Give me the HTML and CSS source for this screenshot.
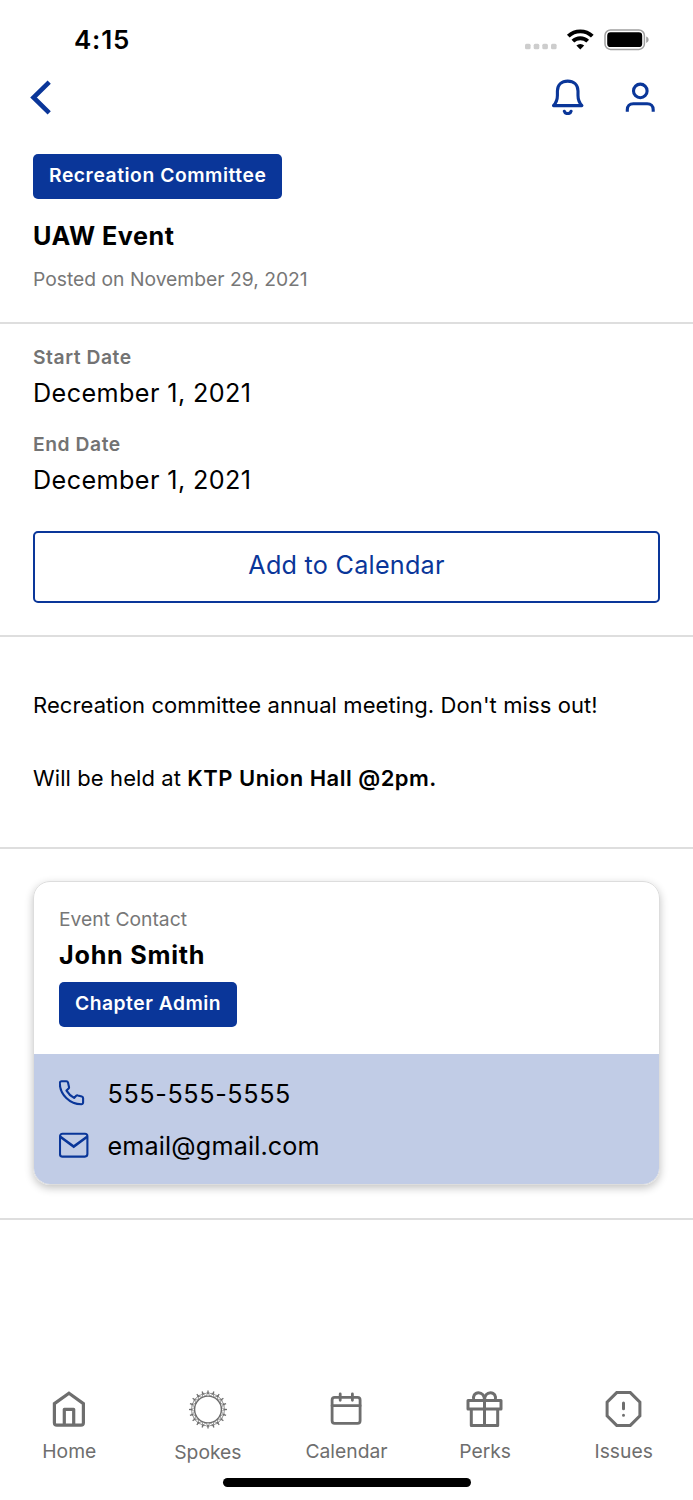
FILE: index.html
```html
<!DOCTYPE html>
<html lang="en">
<head>
<meta charset="utf-8">
<meta name="viewport" content="width=device-width, initial-scale=1">
<title>UAW Event</title>
<link rel="stylesheet" href="styles.css">
</head>
<body>
<div class="statusbar">
  <span class="time">4:15</span>
  <svg class="status-icons" width="126" height="24" viewBox="0 0 126 24">
    <g fill="#cdcdcd">
      <rect x="2" y="15.8" width="5.6" height="5.4" rx="1.5"/>
      <rect x="10.7" y="15.8" width="5.6" height="5.4" rx="1.5"/>
      <rect x="19.3" y="15.8" width="5.6" height="5.4" rx="1.5"/>
      <rect x="28" y="15.8" width="5.6" height="5.4" rx="1.5"/>
    </g>
    <g fill="none" stroke="#000" stroke-width="3.9">
      <path d="M45.3 8.2a17.3 17.3 0 0 1 24 0"/>
      <path d="M49.9 13.2a10.6 10.6 0 0 1 14.8 0"/>
    </g>
    <path d="M57.3 21.6l-3.9-4a5.6 5.6 0 0 1 7.8 0z"/>
    <rect x="82" y="2" width="39.4" height="19.4" rx="5.5" fill="none" stroke="#a0a0a0" stroke-width="1.5"/>
    <rect x="84.2" y="4.3" width="35" height="14.8" rx="3.4"/>
    <path d="M123.2 8.5v6.4c3.2-1.3 3.2-5.1 0-6.4z" fill="#a0a0a0"/>
  </svg>
</div>

<div class="header">
  <svg class="icon back" width="36" height="36" viewBox="0 0 36 36" stroke-width="4.6">
    <path d="M21.2 3.2L5.500 18.500l15.700 15.300"/>
  </svg>
  <svg class="icon" width="36" height="36" viewBox="0 0 36 36" stroke-width="3.1">
    <path d="M3.500 26.600C6.500 23.400 7.400 21 7.400 16.500V12C7.400 5.600 11.900 2.100 17.700 2.100S28 5.600 28 12v4.500c0 4.500.9 6.900 3.900 10.100z" stroke-linejoin="round"/>
    <path d="M14.300 32.200c.7 3.200 6.100 3.200 6.800 0" stroke-linecap="round"/>
  </svg>
  <svg class="icon" width="36" height="36" viewBox="0 0 36 36" stroke-width="3.1">
    <circle cx="18.300" cy="11.900" r="6.800"/>
    <path d="M5.300 32.800v-2.100c0-3.600 2.300-6 6-6h13.900c3.700 0 6 2.400 6 6v2.100"/>
  </svg>
</div>

<div class="section intro">
  <span class="tag">Recreation Committee</span>
  <h1>UAW Event</h1>
  <p class="muted posted">Posted on November 29, 2021</p>
</div>

<div class="section dates">
  <p class="label">Start Date</p>
  <p class="value">December 1, 2021</p>
  <p class="label">End Date</p>
  <p class="value">December 1, 2021</p>
  <button class="btn">Add to Calendar</button>
</div>

<div class="section description">
  <p>Recreation committee annual meeting. Don't miss out!</p>
  <p>Will be held at <b>KTP Union Hall @2pm.</b></p>
</div>

<div class="section contact">
  <div class="card">
    <div class="card-top">
      <p class="muted">Event Contact</p>
      <h2>John Smith</h2>
      <span class="tag admin">Chapter Admin</span>
    </div>
    <div class="card-bottom">
      <div class="row">
        <svg class="icon" width="32" height="32" viewBox="0 0 32 32" stroke-width="2.1">
          <path d="M2.600 3.300h4.800c.8 0 1.400.5 1.600 1.300l1 4.400c.1.600 0 1.100-.4 1.500l-2.100 2.100c2 3.300 4.300 5.500 7.600 7.300l2.100-2.100c.4-.4 1-.6 1.600-.4l4 1c.8.2 1.300.9 1.300 1.700v4.500c0 1-.8 1.800-1.800 1.700C10.900 26.300.8 16.700.8 5.100c0-1 .8-1.800 1.800-1.800z" stroke-linejoin="round"/>
        </svg>
        <span class="phone">555-555-5555</span>
      </div>
      <div class="row">
        <svg class="icon" width="32" height="32" viewBox="0 0 32 32" stroke-width="2.100">
          <rect x="1" y="3.800" width="27.400" height="22.800" rx="2.500"/>
          <path d="M1.300 6.800l13.400 9.800L28.100 6.800" stroke-width="2.600"/>
        </svg>
        <span class="email">email@gmail.com</span>
      </div>
    </div>
  </div>
</div>

<div class="tabbar">
  <div class="tab">
    <svg width="40" height="40" viewBox="0 0 40 40" stroke-width="3.200">
      <path d="M20 4.200L34.400 14.600v19.100a2.500 2.500 0 0 1-2.500 2.500H7.900a2.500 2.500 0 0 1-2.500-2.500V14.600z"/>
      <path d="M15.300 36V20.300h9.400V36" stroke-linejoin="round"/>
    </svg>
    <span>Home</span>
  </div>
  <div class="tab">
    <svg width="40" height="40" viewBox="0 0 40 40">
      <circle cx="20" cy="20.500" r="13.400" stroke-width="1.400"/>
      <g id="spokes"></g>
    </svg>
    <span class="low">Spokes</span>
  </div>
  <div class="tab">
    <svg width="40" height="40" viewBox="0 0 40 40" stroke-width="2.800">
      <rect x="6.100" y="8.400" width="28" height="26" rx="2.600"/>
      <path d="M6.100 16.700h28M14.200 5v6.300M26.400 5v6.300" stroke-linecap="round"/>
    </svg>
    <span>Calendar</span>
  </div>
  <div class="tab">
    <svg width="40" height="40" viewBox="0 0 40 40" stroke-width="3" stroke-linejoin="round">
      <path d="M3 11.500h33v8.400H3zM6.300 19.900v16.500h26.400V19.900M19.500 11.500v24.900"/>
      <path d="M19.500 11.500c0-4.800-2.500-7.800-6-7.800-3.700 0-6 3.300-4.700 7.800M19.500 11.500c0-4.800 2.500-7.800 6-7.800 3.700 0 6 3.300 4.700 7.800"/>
    </svg>
    <span>Perks</span>
  </div>
  <div class="tab">
    <svg width="40" height="40" viewBox="0 0 40 40" stroke-width="3">
      <path d="M12.700 3.600h13.600l9.600 9.600v13.600l-9.600 9.600H12.700l-9.600-9.600V13.200z"/>
      <path d="M19.500 14v5.700M19.500 26.200v.1" stroke-linecap="round"/>
    </svg>
    <span>Issues</span>
  </div>
</div>
<div class="home-indicator"></div>

<script>
  // one small figure per spoke around the wheel
  var count = 20;
  var spokes = "";
  for (var i = 0; i < count; i++) {
    spokes += '<g transform="rotate(' + i * 360 / count + ' 20 20.5)">' +
      '<path stroke-width=".7" d="M18 7L20 3.900L22 7M17.400 4.500L20 3.500L22.600 4.500"/>' +
      '<path stroke-width="1.300" d="M20 1.500V4.900"/></g>';
  }
  document.getElementById("spokes").innerHTML = spokes;
</script>
</body>
</html>
```

FILE: styles.css
```css
* {box-sizing: border-box;}

body {
  display: flex;
  flex-direction: column;
  height: 1500px;
  margin: 0;
  background: #fff;
  color: #000;
  font-family: Inter, "Liberation Sans", sans-serif;
  font-size: 25.2px;
}

p, h1, h2 {
  margin: 0;
}

svg {
  display: block;
  fill: none;
}

.icon {
  stroke: #0a3699;
}

.statusbar {
  display: flex;
  align-items: center;
  justify-content: space-between;
  height: 79px;
  padding: 0 44px 0 74px;
}

.status-icons {
  fill: #000;
}

.time {
  font-size: 26px;
  font-weight: 600;
  letter-spacing: .8px;
}

.header {
  display: flex;
  gap: 36.7px;
  height: 36px;
  padding: 0 34.7px 0 28px;
}

.header .back {
  margin-right: auto;
}

.section {
  border-bottom: 2px solid #dedede;
  padding: 0 33px;
}

.tag {
  display: block;
  width: fit-content;
  height: 45px;
  padding: 0 16px;
  border-radius: 5px;
  background: #0a3699;
  color: #fff;
  font-size: 19.3px;
  font-weight: 600;
  line-height: 42px;
  letter-spacing: .55px;
}

.admin {
  letter-spacing: .5px;
}

h1, h2 {
  font-size: 25.2px;
  font-weight: 700;
  line-height: 32px;
}

h1 {
  letter-spacing: .5px;
}

h2 {
  letter-spacing: .75px;
}

.muted {
  color: #777;
  font-size: 19.3px;
  line-height: 24px;
}

.intro {
  padding-top: 39px;
  padding-bottom: 31px;
}

.intro h1 {
  margin-top: 21px;
}

.posted {
  margin-top: 15px;
}

.dates {
  padding-top: 21px;
  padding-bottom: 32px;
}

.label {
  color: #737373;
  font-size: 19.3px;
  font-weight: 600;
  line-height: 24px;
  letter-spacing: .55px;
}

.value {
  margin: 7.5px 0 23.5px;
  line-height: 32px;
  letter-spacing: .4px;
}

.btn {
  display: block;
  width: 100%;
  height: 72px;
  margin-top: 35px;
  padding: 0 0 4px;
  border: 2px solid #0a3699;
  border-radius: 5px;
  background: #fff;
  color: #0a3699;
  font: inherit;
  letter-spacing: .25px;
}

.description {
  padding-top: 52px;
  padding-bottom: 53px;
  font-size: 22px;
  line-height: 32px;
  letter-spacing: .09px;
}

.description p + p {
  margin-top: 41px;
}

.description b {
  font-weight: 600;
  letter-spacing: .48px;
}

.contact {
  padding-top: 32px;
  padding-bottom: 33px;
}

.card {
  overflow: hidden;
  border: 1.5px solid #ddd;
  border-radius: 17px;
  box-shadow: 0 3px 8px rgba(0, 0, 0, .24);
}

.card-top {
  height: 172px;
  padding: 25px 25px 0;
}

.card-top h2 {
  margin: 8px 0 11px;
}

.card-bottom {
  display: flex;
  flex-direction: column;
  gap: 20px;
  height: 130px;
  padding: 24px 25px 0;
  background: #c1cce6;
}

.row {
  display: flex;
  align-items: center;
  gap: 16.5px;
  height: 32px;
}

.phone {
  letter-spacing: .6px;
}

.email {
  letter-spacing: .15px;
}

.tabbar {
  display: flex;
  margin-top: auto;
}

.tab {
  display: flex;
  flex: 1;
  flex-direction: column;
  align-items: center;
  gap: 10px;
  color: #6e6e6e;
  font-size: 19.3px;
  line-height: 24px;
}

.tab svg {
  stroke: #6e6e6e;
}

.tab .low {
  padding-top: 1px;
  margin-bottom: -1px;
}

.home-indicator {
  width: 248px;
  height: 9px;
  margin: 15px auto 13px;
  border-radius: 5px;
  background: #000;
}
```
